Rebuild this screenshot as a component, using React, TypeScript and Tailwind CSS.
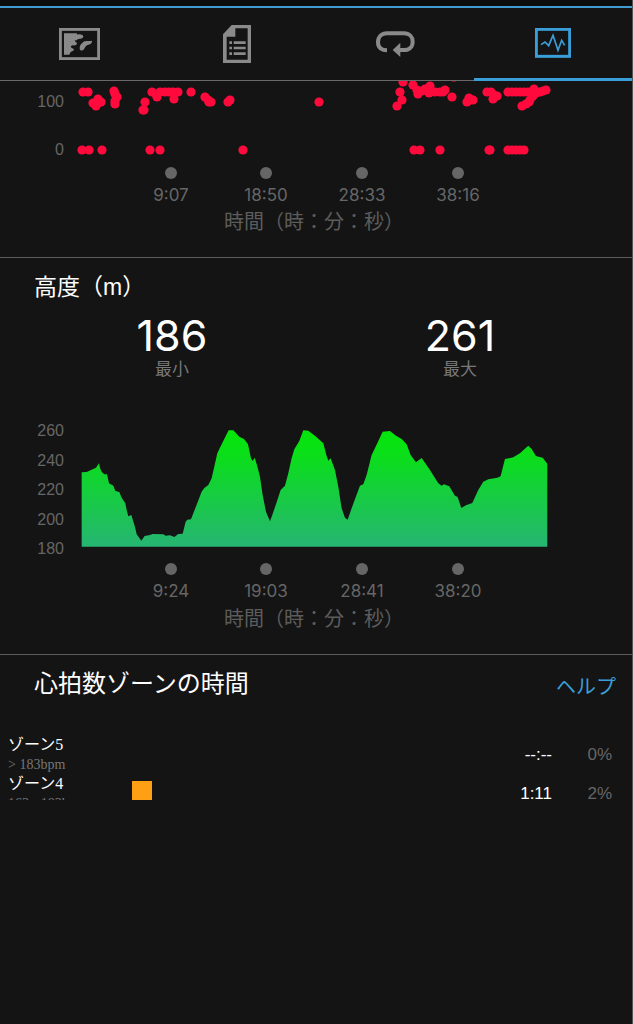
import React from 'react';

type Point = [number, number];

interface Tick {
  x: number;
  label: string;
}

interface Zone {
  name: string;
  range: string;
  time: string;
  percent: string;
  hasBar: boolean;
}

const scatterPoints: Point[] = [
  [83, 11], [88, 11], [98, 18], [93, 22], [96, 25], [98, 22], [101, 21],
  [114, 10], [115, 13], [117, 16], [115, 20], [115, 23],
  [145, 21], [143, 29], [144, 29], [152, 11], [157, 16], [156, 13], [160, 11], [165, 11], [169, 11], [173, 11], [178, 11],
  [174, 18], [191, 11], [205, 16], [208, 19], [211, 21], [209, 21], [228, 21], [230, 19],
  [319, 21],
  [403, 1], [413, 4], [400, 11], [402, 19], [397, 25], [417, 9], [418, 13], [425, 8], [422, 10], [430, 5], [429, 12],
  [435, 11], [440, 11], [445, 9], [443, 11], [452, 16], [454, -4], [469, 17], [467, 21], [470, 19], [473, 19],
  [487, 11], [491, 11], [493, 18], [494, 14], [497, 15],
  [508, 11], [512, 11], [516, 11], [520, 11], [524, 11], [528, 11], [532, 11], [534, 8], [536, 12], [540, 11], [543, 10], [546, 9],
  [533, 15], [530, 19], [529, 21], [526, 23], [522, 25],
  [82, 69], [89, 69], [102, 69], [150, 69], [160, 69], [243, 69],
  [414, 69], [420, 69], [440, 69], [489, 69], [490, 69], [508, 69], [512, 69], [516, 69], [520, 69], [524, 69],
];

// Drawn at three units per pixel
const altitudePath =
  'M185 395 L185 172 L200 171 L228 158 L237 145 L241 162 L246 172 L253 178 L261 178 L267 205 L280 212 L286 228 L298 231 L305 248 L316 265 L320 285 L325 304 L334 300 L345 336 L350 358 L364 377 L374 363 L390 360 L398 357 L430 358 L437 362 L450 361 L463 366 L475 357 L488 356 L497 320 L502 314 L513 313 L527 277 L545 230 L553 219 L565 210 L575 190 L592 115 L605 88 L626 46 L640 46 L658 65 L672 72 L684 88 L693 130 L698 138 L704 128 L711 150 L720 185 L728 240 L738 290 L750 319 L757 300 L770 262 L782 225 L795 212 L805 175 L815 130 L823 103 L838 78 L850 46 L865 47 L885 62 L910 85 L919 120 L925 137 L932 130 L945 165 L955 215 L965 280 L975 308 L983 314 L995 280 L1020 212 L1030 208 L1040 180 L1055 120 L1072 85 L1088 50 L1110 48 L1128 62 L1145 72 L1160 88 L1172 120 L1188 142 L1205 129 L1230 165 L1255 205 L1265 212 L1272 208 L1288 214 L1305 242 L1313 246 L1324 279 L1338 271 L1357 264 L1375 225 L1390 200 L1405 193 L1432 188 L1442 184 L1455 132 L1480 127 L1500 115 L1525 92 L1535 102 L1548 123 L1568 128 L1582 146 L1582 395 Z';

const heartTicks: Tick[] = [
  { x: 171, label: '9:07' },
  { x: 266, label: '18:50' },
  { x: 362, label: '28:33' },
  { x: 458, label: '38:16' },
];

const altitudeTicks: Tick[] = [
  { x: 171, label: '9:24' },
  { x: 266, label: '19:03' },
  { x: 362, label: '28:41' },
  { x: 458, label: '38:20' },
];

const zones: Zone[] = [
  { name: 'ゾーン5', range: '> 183bpm', time: '--:--', percent: '0%', hasBar: false },
  { name: 'ゾーン4', range: '163 - 183bpm', time: '1:11', percent: '2%', hasBar: true },
];

function MapIcon() {
  return (
    <svg width="41" height="32" viewBox="0 0 123 96" fill="currentColor">
      <rect x="4" y="4" width="115" height="88" fill="none" stroke="currentColor" strokeWidth="9" />
      <path d="M15 16H53L56 20C62 17 72 20 73 25C73 32 64 33 57 33L53 37H47L50 42L54 45C54 51 49 53 42 52C34 53 34 58 40 61L45 64C44 70 39 70 35 72L31 80H15Z" />
      <path d="M98 38C101 42 97 48 89 50C81 51 79 56 75 64C72 69 63 69 62 62C61 53 66 46 74 41C80 37 92 40 98 38Z" />
    </svg>
  );
}

function DocumentIcon() {
  return (
    <svg width="28" height="38" viewBox="0 0 84 114" fill="currentColor">
      <path fillRule="evenodd" d="M26 0H84V114H0V28ZM37 10V35H11V104H74V10Z" />
      <path d="M19 49h8v8h-8zM32 49h36v8h-36zM19 65h8v8h-8zM32 65h36v8h-36zM19 82h8v8h-8zM32 82h36v8h-36z" />
    </svg>
  );
}

function LoopIcon() {
  return (
    <svg width="39" height="26" viewBox="0 0 117 78">
      <path d="M33 58C18 58 6 51 6 34C6 17 17 7 33 7H84C100 7 110 18 110 32C110 47 100 57 84 57H66" fill="none" stroke="currentColor" strokeWidth="12" />
      <path d="M50 57L73 35V78Z" fill="currentColor" />
    </svg>
  );
}

function ActivityIcon() {
  return (
    <svg width="36" height="30" viewBox="0 0 108 90" fill="none" stroke="currentColor">
      <rect x="4" y="4" width="100" height="81" strokeWidth="9" />
      <path d="M18 50L30 42L41 53L54 22L69 67L80 37L89 52" strokeWidth="5" />
    </svg>
  );
}

function AxisTicks({ ticks, y }: { ticks: Tick[]; y: number }) {
  return (
    <g textAnchor="middle" className="fill-[#666666] font-['Inter','Liberation_Sans',sans-serif] text-[17px]">
      {ticks.map((tick) => (
        <g key={tick.label}>
          <circle cx={tick.x} cy={y} r="6" />
          <text x={tick.x} y={y + 28}>
            {tick.label}
          </text>
        </g>
      ))}
    </g>
  );
}

function AxisTitle() {
  return <p className="pr-1 pb-[22px] text-center text-[20px] leading-[26px] text-[#5c5c5c]">時間（時：分：秒）</p>;
}

function HeartRateSection() {
  return (
    <section className="border-b border-[#5a5a5a]">
      <svg viewBox="0 0 632 128" className="block w-full" role="img" aria-label="心拍数">
        <g textAnchor="end" className="fill-[#666666] text-[16px]">
          <text x="64" y="26">100</text>
          <text x="64" y="74">0</text>
        </g>
        <g className="fill-[#ff0a3c]">
          {scatterPoints.map(([x, y], index) => (
            <circle key={index} cx={x} cy={y} r="4.6" />
          ))}
        </g>
        <AxisTicks ticks={heartTicks} y={92} />
      </svg>
      <AxisTitle />
    </section>
  );
}

function Stat({ value, label }: { value: string; label: string }) {
  return (
    <div className="text-center">
      <div className="font-['Inter','Liberation_Sans',sans-serif] text-[43px] leading-[42px] text-white">{value}</div>
      <div className="mt-[2px] text-[17px] leading-6 text-[#777777]">{label}</div>
    </div>
  );
}

function AltitudeSection() {
  return (
    <section className="border-b border-[#5a5a5a] pt-3">
      <h2 className="px-[34px] text-[23px] leading-[34px] text-white">高度（m）</h2>
      <div className="mt-[10px] grid grid-cols-2 px-7">
        <Stat value="186" label="最小" />
        <Stat value="261" label="最大" />
      </div>
      <svg viewBox="0 0 632 192" className="mt-8 block w-full" role="img" aria-label="高度">
        <defs>
          <linearGradient id="altitude" x1="0" y1="0" x2="0" y2="1">
            <stop offset="0" stopColor="#04e60a" />
            <stop offset="0.2" stopColor="#0adf18" />
            <stop offset="1" stopColor="#26b573" />
          </linearGradient>
        </defs>
        <g textAnchor="end" className="fill-[#666666] text-[16px]">
          <text x="64" y="22">260</text>
          <text x="64" y="52">240</text>
          <text x="64" y="81">220</text>
          <text x="64" y="111">200</text>
          <text x="64" y="140">180</text>
        </g>
        <path d={altitudePath} transform="translate(20 1) scale(0.3333)" fill="url(#altitude)" />
        <AxisTicks ticks={altitudeTicks} y={155} />
      </svg>
      <AxisTitle />
    </section>
  );
}

function ZoneSection() {
  return (
    <section className="pt-3">
      <div className="flex items-end justify-between pr-4 pl-[34px]">
        <h2 className="text-[24px] leading-[34px] text-white">心拍数ゾーンの時間</h2>
        <a href="#help" className="text-[20px] leading-7 text-[#3a9fd8]">
          ヘルプ
        </a>
      </div>
      {/* The list is cut off part way through the second row */}
      <div className="mt-[34px] h-[65px] overflow-hidden">
        <table className="w-full table-fixed border-collapse">
          <tbody>
            {zones.map((zone) => (
              <tr key={zone.name}>
                <th scope="row" className="w-[132px] p-0 pl-2 text-left font-['Liberation_Serif','Noto_Sans_CJK_JP',serif] font-normal whitespace-nowrap">
                  <div className="h-5 text-[16px] leading-5 text-white">{zone.name}</div>
                  <div className="h-[19px] w-[58px] overflow-hidden text-[14px] leading-[19px] text-[#777777]">{zone.range}</div>
                </th>
                <td className="p-0">{zone.hasBar && <div className="h-[26px] w-5 bg-[#ff9f14]" />}</td>
                <td className="w-20 p-0 text-right text-[17px] text-white">{zone.time}</td>
                <td className="w-20 p-0 pr-5 text-right text-[17px] text-[#666666]">{zone.percent}</td>
              </tr>
            ))}
          </tbody>
        </table>
      </div>
    </section>
  );
}

export default function App() {
  const tabs = [
    { label: 'マップ', icon: <MapIcon /> },
    { label: '詳細', icon: <DocumentIcon /> },
    { label: 'ラップ', icon: <LoopIcon /> },
    { label: 'グラフ', icon: <ActivityIcon />, active: true },
  ];

  return (
    <div className="min-h-screen border-r border-[#555555] bg-[#141414] font-['Liberation_Sans','Noto_Sans_CJK_JP',sans-serif]">
      <div className="h-[6px] bg-[#0d0d0d]" />
      <nav className="grid grid-cols-4 border-t-2 border-[#3f9bd0]">
        {tabs.map((tab) => (
          <button
            key={tab.label}
            aria-label={tab.label}
            className={
              tab.active
                ? 'flex h-[73px] items-center justify-center border-b-[3px] border-[#3a9fd8] text-[#3a9fd8]'
                : 'flex h-[73px] items-center justify-center border-b border-[#6a6a6a] text-[#8a8a8a]'
            }
          >
            {tab.icon}
          </button>
        ))}
      </nav>
      <main>
        <HeartRateSection />
        <AltitudeSection />
        <ZoneSection />
      </main>
    </div>
  );
}
